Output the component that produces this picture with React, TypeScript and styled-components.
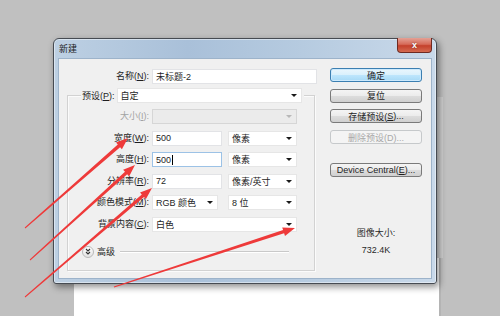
import React from "react";
import styled, { createGlobalStyle, css } from "styled-components";

const Global = createGlobalStyle`
  html, body { margin: 0; padding: 0; background: #c0c0c0; overflow: hidden; }
  body { font-family: "Liberation Sans", "Noto Sans CJK SC", sans-serif; }
  * { box-sizing: border-box; }
  u { text-underline-offset: 1px; }
`;

const Desktop = styled.div`
  position: relative;
  width: 500px;
  height: 316px;
  overflow: hidden;
  background: #c0c0c0;
`;

const DocWindow = styled.div`
  position: absolute;
  left: 74px;
  top: 258px;
  width: 367px;
  height: 70px;
  background: #ffffff;
  border-right: 2px solid #b4b4b4;
`;

const DocEdge = styled.div`
  position: absolute;
  left: 437px;
  top: 97px;
  width: 6px;
  height: 161px;
  background: #cfcfcf;
`;

const Dialog = styled.div`
  position: absolute;
  left: 53px;
  top: 38px;
  width: 384px;
  height: 246px;
  display: flex;
  flex-direction: column;
  padding: 0 4px 4px 4px;
  border: 1px solid #464b52;
  border-radius: 6px 6px 3px 3px;
  background: linear-gradient(to right, #bdd0e3 0%, #a9c0d9 35%, #b6cbe0 65%, #c9d9ea 100%);
  box-shadow: 2px 3px 7px rgba(0, 0, 0, 0.45), inset 0 0 0 1px rgba(255, 255, 255, 0.45);
`;

const TitleBar = styled.div`
  height: 19px;
  display: flex;
  align-items: center;
  padding-left: 1px;
  font-size: 9px;
  color: #1e1e1e;
`;

const CloseButton = styled.div`
  margin-left: auto;
  align-self: flex-start;
  margin-top: -1px;
  width: 35px;
  height: 15px;
  display: flex;
  align-items: center;
  justify-content: center;
  border: 1px solid #6e2a22;
  border-top: none;
  border-radius: 0 0 4px 4px;
  background: linear-gradient(#e4a195 0%, #d66a58 45%, #c4402c 55%, #d46a50 100%);
  color: #ffffff;
  font-size: 9px;
  font-weight: bold;
  text-shadow: 0 0 2px rgba(0, 0, 0, 0.5);
`;

const Client = styled.div`
  flex: 1;
  display: flex;
  padding: 10px 9px 0 8px;
  background: #f0f0f0;
  border: 1px solid #9db3ca;
  font-size: 9px;
  color: #1e1e1e;
`;

const LeftCol = styled.div`
  width: 250px;
  display: flex;
  flex-direction: column;
`;

const Row = styled.div`
  display: flex;
  align-items: center;
  height: 15px;
`;

const Label = styled.div<{ $w: number; $disabled?: boolean }>`
  width: ${(p) => p.$w}px;
  margin-right: 3px;
  text-align: right;
  white-space: nowrap;
  line-height: 15px;
  color: ${(p) => (p.$disabled ? "#a3a3a3" : "#1e1e1e")};
`;

const Field = styled.div<{ $w: number; $focused?: boolean }>`
  width: ${(p) => p.$w}px;
  height: 15px;
  display: flex;
  align-items: center;
  padding-left: 3px;
  background: #ffffff;
  border: 1px solid ${(p) => (p.$focused ? "#9cc2e6" : "#e2e3e6")};
  white-space: nowrap;
`;

const Caret = styled.span`
  display: inline-block;
  width: 1px;
  height: 10px;
  background: #000;
  margin-left: 1px;
`;

const Select = styled.div<{ $w: number; $disabled?: boolean; $ml?: number }>`
  width: ${(p) => p.$w}px;
  height: 15px;
  margin-left: ${(p) => p.$ml ?? 0}px;
  display: flex;
  align-items: center;
  padding: 0 4px 0 3px;
  white-space: nowrap;
  ${(p) =>
    p.$disabled
      ? css`
          background: #ebebeb;
          border: 1px solid #d6d6d6;
          color: #a3a3a3;
        `
      : css`
          background: #ffffff;
          border: 1px solid #e6e6e6;
        `}
`;

const Arrow = styled.span<{ $disabled?: boolean }>`
  margin-left: auto;
  width: 0;
  height: 0;
  border-left: 3px solid transparent;
  border-right: 3px solid transparent;
  border-top: 3px solid ${(p) => (p.$disabled ? "#b8b8b8" : "#1a1a1a")};
`;

const Group = styled.div`
  margin-top: 11px;
  width: 248px;
  height: 176px;
  display: flex;
  flex-direction: column;
  border: 1px solid #d2d2d2;
  box-shadow: inset 1px 1px 0 #fbfbfb, 1px 1px 0 #fbfbfb;
`;

const Legend = styled.div`
  margin: -8px 0 0 13px;
  padding: 0 2px 0 1px;
  align-self: flex-start;
  display: flex;
  align-items: center;
  height: 15px;
  background: #f0f0f0;
`;

const LegendLabel = styled.span`
  margin-right: 2px;
  white-space: nowrap;
`;

const Rows = styled.div`
  margin-top: 6px;
  display: flex;
  flex-direction: column;
  gap: 6.6px;
`;

const Advanced = styled.div`
  margin: 14px 0 0 14px;
  display: flex;
  align-items: center;
  height: 12px;
`;

const ExpandButton = styled.div`
  width: 12px;
  height: 12px;
  border-radius: 50%;
  border: 1px solid #b9b9b9;
  background: linear-gradient(#ffffff, #e2e2e2);
  display: flex;
  align-items: center;
  justify-content: center;
  margin-right: 3px;
`;

const Rule = styled.div`
  flex: 1;
  margin: 0 25px 0 5px;
  height: 2px;
  border-top: 1px solid #c9c9c9;
  border-bottom: 1px solid #ffffff;
`;

const RightCol = styled.div`
  margin-left: 13px;
  width: 92px;
  display: flex;
  flex-direction: column;
`;

const Buttons = styled.div`
  margin-top: -1px;
  display: flex;
  flex-direction: column;
  gap: 6.7px;
`;

const Button = styled.div<{ $kind?: "default" | "disabled"; $mt?: number }>`
  height: 14px;
  margin-top: ${(p) => p.$mt ?? 0}px;
  display: flex;
  align-items: center;
  justify-content: center;
  border-radius: 3px;
  white-space: nowrap;
  font-size: 9px;
  ${(p) =>
    p.$kind === "default"
      ? css`
          border: 1px solid #3c7fb1;
          background: linear-gradient(#eaf6fd 0%, #d9f0fc 50%, #bee6fd 50%, #a7d9f5 100%);
          box-shadow: inset 0 0 0 1px #cdeafd;
          color: #1e1e1e;
        `
      : p.$kind === "disabled"
      ? css`
          border: 1px solid #c6c9cb;
          background: #f4f4f4;
          color: #a8a8a8;
        `
      : css`
          border: 1px solid #7a7a7a;
          background: linear-gradient(#f4f4f4 0%, #ebebeb 50%, #dddddd 50%, #d0d0d0 100%);
          color: #1e1e1e;
        `}
`;

const SizeInfo = styled.div`
  margin-top: 50px;
  display: flex;
  flex-direction: column;
  align-items: center;
  gap: 5px;
  line-height: 12px;
  color: #2a2a2a;
`;

const Overlay = styled.svg`
  position: absolute;
  left: 0;
  top: 0;
  pointer-events: none;
`;

function arrowPoints(tx: number, ty: number, hx: number, hy: number): string {
  const dx = hx - tx;
  const dy = hy - ty;
  const len = Math.hypot(dx, dy);
  const ux = dx / len;
  const uy = dy / len;
  const nx = -uy;
  const ny = ux;
  const headLen = 12;
  const headW = 4.5;
  const w0 = 0.5;
  const w1 = 1.7;
  const bx = hx - ux * headLen;
  const by = hy - uy * headLen;
  const pts: [number, number][] = [
    [tx + nx * w0, ty + ny * w0],
    [bx + nx * w1, by + ny * w1],
    [bx + nx * headW, by + ny * headW],
    [hx, hy],
    [bx - nx * headW, by - ny * headW],
    [bx - nx * w1, by - ny * w1],
    [tx - nx * w0, ty - ny * w0],
  ];
  return pts.map(([x, y]) => `${x.toFixed(1)},${y.toFixed(1)}`).join(" ");
}

const arrows: [number, number, number, number][] = [
  [25, 228, 128, 138],
  [30, 260, 135, 165],
  [25, 297, 152, 188],
  [114, 287, 295, 228],
];

const LABEL_W = 81;

export default function App() {
  return (
    <Desktop>
      <Global />
      <DocEdge />
      <DocWindow />
      <Dialog>
        <TitleBar>
          <span>新建</span>
          <CloseButton>x</CloseButton>
        </TitleBar>
        <Client>
          <LeftCol>
            <Row>
              <Label $w={82}>
                名称(<u>N</u>):
              </Label>
              <Field $w={165}>未标题-2</Field>
            </Row>
            <Group>
              <Legend>
                <LegendLabel>
                  预设(<u>P</u>):
                </LegendLabel>
                <Select $w={185}>
                  自定
                  <Arrow />
                </Select>
              </Legend>
              <Rows>
                <Row>
                  <Label $w={LABEL_W} $disabled>
                    大小(<u>I</u>):
                  </Label>
                  <Select $w={145} $disabled>
                    <Arrow $disabled />
                  </Select>
                </Row>
                <Row>
                  <Label $w={LABEL_W}>
                    宽度(<u>W</u>):
                  </Label>
                  <Field $w={70}>500</Field>
                  <Select $w={69} $ml={6}>
                    像素
                    <Arrow />
                  </Select>
                </Row>
                <Row>
                  <Label $w={LABEL_W}>
                    高度(<u>H</u>):
                  </Label>
                  <Field $w={70} $focused>
                    500
                    <Caret />
                  </Field>
                  <Select $w={69} $ml={6}>
                    像素
                    <Arrow />
                  </Select>
                </Row>
                <Row>
                  <Label $w={LABEL_W}>
                    分辨率(<u>R</u>):
                  </Label>
                  <Field $w={70}>72</Field>
                  <Select $w={69} $ml={6}>
                    像素/英寸
                    <Arrow />
                  </Select>
                </Row>
                <Row>
                  <Label $w={LABEL_W}>
                    颜色模式(<u>M</u>):
                  </Label>
                  <Select $w={66}>
                    RGB 颜色
                    <Arrow />
                  </Select>
                  <Select $w={69} $ml={10}>
                    8 位
                    <Arrow />
                  </Select>
                </Row>
                <Row>
                  <Label $w={LABEL_W}>
                    背景内容(<u>C</u>):
                  </Label>
                  <Select $w={145}>
                    白色
                    <Arrow />
                  </Select>
                </Row>
              </Rows>
              <Advanced>
                <ExpandButton>
                  <svg width="6" height="7" viewBox="0 0 6 7">
                    <path d="M1 1 L3 3 L5 1 M1 4 L3 6 L5 4" fill="none" stroke="#333" strokeWidth="1.1" />
                  </svg>
                </ExpandButton>
                <span>高级</span>
                <Rule />
              </Advanced>
            </Group>
          </LeftCol>
          <RightCol>
            <Buttons>
              <Button $kind="default">确定</Button>
              <Button>复位</Button>
              <Button>
                存储预设(<u>S</u>)...
              </Button>
              <Button $kind="disabled">删除预设(D)...</Button>
              <Button $mt={12}>
                Device Central(<u>E</u>)...
              </Button>
            </Buttons>
            <SizeInfo>
              <span>图像大小:</span>
              <span>732.4K</span>
            </SizeInfo>
          </RightCol>
        </Client>
      </Dialog>
      <Overlay width={500} height={316} viewBox="0 0 500 316">
        {arrows.map(([a, b, c, d], i) => (
          <polygon key={i} points={arrowPoints(a, b, c, d)} fill="#ee3a3a" />
        ))}
      </Overlay>
    </Desktop>
  );
}
